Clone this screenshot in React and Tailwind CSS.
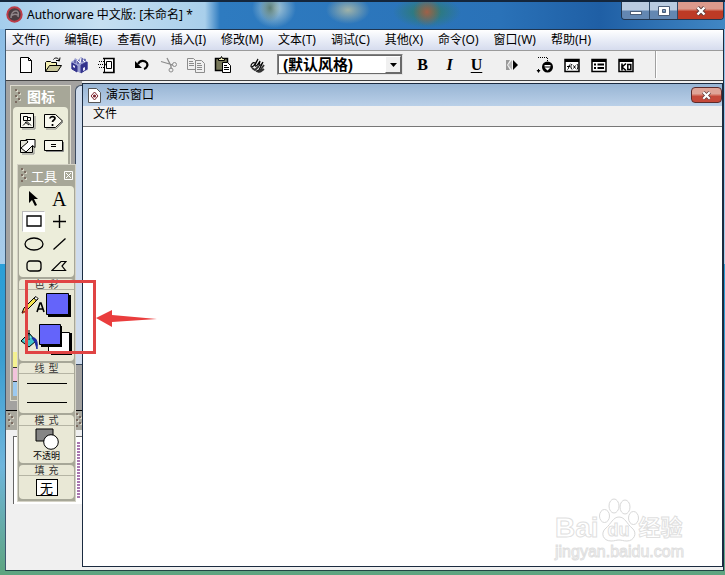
import React from 'react';

const MENUS = [
  '文件(F)', '编辑(E)', '查看(V)', '插入(I)', '修改(M)', '文本(T)',
  '调试(C)', '其他(X)', '命令(O)', '窗口(W)', '帮助(H)',
];

const Icon = ({ children, w = 18, h = 18 }) => (
  <svg width={w} height={h} viewBox={`0 0 ${w} ${h}`} fill="none" stroke="#000" aria-hidden="true">
    {children}
  </svg>
);

const NewIcon = () => (
  <Icon>
    <path d="M3.5 1.5h8l3 3v12h-11z" fill="#fff" />
    <path d="M11.5 1.5v3h3M14.5 5v12M3 16.5h12" />
  </Icon>
);

const OpenIcon = () => (
  <Icon>
    <path d="M1.5 15.5v-9l1-1h4l1 1h5v3" fill="#f5f1b4" />
    <path d="M1.5 15.5l4-6h12l-4 6z" fill="#c9c79c" />
    <path d="M9.5 3.5c1-2 4-2 5.5 0v2M12 4.5h3.5l.5-3" />
  </Icon>
);

const SaveIcon = () => (
  <Icon>
    <path d="M0 6l3-2 1-2 3 2 3-3 3 2 1-1 1 3 2 1v8l-4 1-4 2-5-3-4-1z" fill="#9ba0d2" stroke="none" />
    <path d="M1 7l5 3v6l-5-3zM7 4v4M10 9l6-3v7l-6 4zM11 2v4M14 3v2M4 4v3" fill="#33338c" stroke="#33338c" />
    <path d="M2 9l2 1v2l-2-1zM12 12l2-1v3l-2 1z" fill="#e8eaf8" stroke="none" />
    <path d="M6 4l3 3 1-5M12 4l2 2" stroke="#fff" />
  </Icon>
);

const ImportIcon = () => (
  <Icon>
    <path d="M6.5 2.5h9v14h-9z" fill="#fff" />
    <path d="M5 2.5h11v14H5" strokeWidth="1.5" />
    <path d="M8.5 5.5h5v7h-5z" />
    <path d="M1 5.5h5M0 8.5h7M1 11.5h5" strokeDasharray="1 1" />
    <path d="M6 6l2 2.5-2 2.5z" fill="#000" stroke="none" />
  </Icon>
);

const UndoIcon = () => (
  <Icon>
    <path d="M5 8c2-4 7-4 9-1 1 2 0 5-3 6" strokeWidth="2.2" />
    <path d="M2 5v7h7z" fill="#000" stroke="none" />
  </Icon>
);

const CutIcon = () => (
  <Icon>
    <g stroke="#8c8c8c">
      <path d="M1 5.5l12 3.5M7 2l4 8v3" strokeWidth="1.3" />
      <circle cx="14.5" cy="8.5" r="2" />
      <circle cx="11" cy="14" r="2" />
    </g>
  </Icon>
);

const CopyIcon = () => (
  <Icon>
    <g stroke="#8c8c8c" fill="#f0f0f0">
      <path d="M.5 2.5h6l2 2v9h-8z" />
      <path d="M8.5 4.5h6l3 3v9h-9z" />
      <path d="M2 5.5h4M2 7.5h5M2 9.5h5M10 7.5h4M10 9.5h5M10 11.5h5M10 13.5h5" />
    </g>
  </Icon>
);

const PasteIcon = () => (
  <Icon>
    <path d="M1.5 2.5h12v12h-12z" fill="#77775a" strokeWidth="1.5" />
    <path d="M4.5 4.5v-2h2l1-2 1 2h2v2z" fill="#e8e6b4" />
    <path d="M8.5 6.5h5l3 3v7h-8z" fill="#fff" />
    <path d="M10 9.5h3M10 11.5h5M10 13.5h5" />
  </Icon>
);

const FindIcon = () => (
  <Icon>
    <path d="M6 7c-2-1-4 1-4 3s2 1 4-2l3-5-3 6c0 2 2 1 3-1l2-3-1 4c1 1 3-1 4-3l-4 8-2 1" strokeWidth="1.2" />
    <path d="M3 12l3 2 4-4M7 15l3 1 5-7M11 16l4-3" strokeWidth="1.8" stroke="#333" />
  </Icon>
);

const RunIcon = () => (
  <Icon>
    <path d="M3 4h4L4 9l3 5H3z" fill="#999" stroke="none" />
    <path d="M9 4v10L5 9z" fill="#b5b5b5" stroke="none" />
    <path d="M10 4l5 5-5 5z" fill="#000" stroke="none" />
  </Icon>
);

const ControlIcon = () => (
  <Icon>
    <path d="M2 1.5h9M11.5 2v3M2.5 13v3" strokeDasharray="1 1" />
    <path d="M.5 14h4l-2 3z" fill="#000" stroke="none" />
    <circle cx="11.5" cy="11" r="5.5" fill="#000" stroke="none" />
    <path d="M8.5 9h6v1.5h-6zM8.5 11.500h6l-3 3z" fill="#fff" stroke="none" />
  </Icon>
);

const Frame = ({ children }) => (
  <Icon>
    <path d="M2 3.5h14v12H2z" fill="#fff" strokeWidth="1.5" />
    <path d="M2 4.5h14" strokeWidth="3" />
    {children}
  </Icon>
);

const FunctionIcon = () => (
  <Frame>
    <path d="M4.5 13.5c1.5 0 1-5 3-5.500M4 10.5h3M9 8c-1.500 2-1.500 3.500 0 5.500M10.500 9.500l2 3M12.500 9.500l-2 3M14 8c1.300 2 1.300 3.500 0 5.500" />
  </Frame>
);

const ListIcon = () => (
  <Frame>
    <path d="M4 8.5h2M7.5 8.5H14M4 12h2M7.5 12H14" strokeWidth="1.8" />
  </Frame>
);

const KoIcon = () => (
  <Frame>
    <path d="M5 7.5v7M9 7.5l-4 3.5 4 3.5" strokeWidth="1.6" />
    <path d="M10.8 8.5h3v5h-3z" strokeWidth="1.5" />
  </Frame>
);

const ToolButton = ({ label, children }) => (
  <button aria-label={label} className="flex h-6 w-[27px] items-center justify-center">
    {children}
  </button>
);

const Toolbar = () => (
  <div className="flex h-[30px] shrink-0 items-center border-t border-[#9b9b9b] bg-[#f0f0f0] pb-0.5 pl-1.5">
    <div className="flex">
      <ToolButton label="新建"><NewIcon /></ToolButton>
      <ToolButton label="打开"><OpenIcon /></ToolButton>
      <ToolButton label="保存"><SaveIcon /></ToolButton>
      <ToolButton label="导入"><ImportIcon /></ToolButton>
    </div>
    <div className="ml-2 flex">
      <ToolButton label="撤消"><UndoIcon /></ToolButton>
      <ToolButton label="剪切"><CutIcon /></ToolButton>
      <ToolButton label="复制"><CopyIcon /></ToolButton>
      <ToolButton label="粘贴"><PasteIcon /></ToolButton>
    </div>
    <div className="ml-2 flex">
      <ToolButton label="查找"><FindIcon /></ToolButton>
    </div>
    <div className="relative ml-1.5 h-[21px] w-[126px] border border-[#e3e3e3] border-t-[#808080] border-l-[#808080] bg-white">
      <select
        aria-label="风格"
        className="h-full w-full appearance-none border border-[#696969] bg-white pl-1 font-['Liberation_Sans','Noto_Sans_CJK_SC',sans-serif] text-[15px] leading-4 font-bold text-black"
      >
        <option>(默认风格)</option>
      </select>
      <span className="pointer-events-none absolute inset-y-px right-px flex w-4 items-center justify-center border border-white border-r-[#696969] border-b-[#696969] bg-[#f0f0f0]">
        <svg width="7" height="4" viewBox="0 0 7 4" aria-hidden="true"><path d="M0 0h7L3.5 4z" /></svg>
      </span>
    </div>
    <div className="ml-1.5 flex font-['Liberation_Serif',serif] text-[16px] leading-5 font-bold">
      <ToolButton label="粗体">B</ToolButton>
      <ToolButton label="斜体"><span className="italic">I</span></ToolButton>
      <ToolButton label="下划线"><span className="underline underline-offset-2">U</span></ToolButton>
    </div>
    <div className="ml-2 flex">
      <ToolButton label="运行"><RunIcon /></ToolButton>
    </div>
    <div className="ml-1.5 flex">
      <ToolButton label="控制面板"><ControlIcon /></ToolButton>
      <ToolButton label="函数"><FunctionIcon /></ToolButton>
      <ToolButton label="变量"><ListIcon /></ToolButton>
      <ToolButton label="知识对象"><KoIcon /></ToolButton>
    </div>
    <div className="ml-4 h-full w-0.5 border-l border-[#a0a0a0] bg-white" />
  </div>
);

const CloseGlyph = ({ size = 12 }) => (
  <svg width={size} height={size} viewBox="0 0 12 12" aria-hidden="true">
    <path d="M2.5 2.5l7 7M9.5 2.5l-7 7" stroke="#5b3a3a" strokeWidth="4" />
    <path d="M2.5 2.5l7 7M9.5 2.5l-7 7" stroke="#fff" strokeWidth="2.4" />
  </svg>
);

const TitleBar = () => (
  <header className="flex h-[29px] shrink-0 items-start border-t-2 border-[#14263c] pl-1.5">
    <div className="flex h-[25px] items-center">
      <svg width="17" height="17" viewBox="0 0 17 17" fill="none" aria-hidden="true">
        <circle cx="8.5" cy="8.5" r="7.2" fill="#4a3d42" stroke="#bd3c48" strokeWidth="2" />
        <path d="M5 12c0-4 2-7 5-7 2 0 3 2 2 6M5 10c2-2 5-2 7-1" stroke="#90868a" strokeWidth="1.5" />
      </svg>
      <h1 className="ml-1 text-[12px] leading-4">Authorware 中文版: [未命名] *</h1>
    </div>
    <div className="mr-px ml-auto flex h-[18px] overflow-hidden rounded-b border border-t-0 border-[#22364f]">
      <button aria-label="最小化" className="flex w-7 items-center justify-center border-r border-[#2f4967] bg-linear-to-b from-[#b9cbe0] from-45% to-[#6387b2] to-55% pt-1">
        <span className="h-1 w-3 border border-[#4a5d78] bg-white" />
      </button>
      <button aria-label="最大化" className="flex w-7 items-center justify-center border-r border-[#2f4967] bg-linear-to-b from-[#b9cbe0] from-45% to-[#6387b2] to-55%">
        <svg width="12" height="10" viewBox="0 0 12 10" aria-hidden="true">
          <path d="M.5.5h11v9H.5zM4.5 3.5h3v3h-3z" fill="#fff" fillRule="evenodd" stroke="#4a5d78" />
        </svg>
      </button>
      <button aria-label="关闭" className="flex w-[45px] items-center justify-center bg-linear-to-b from-[#dc9a8c] from-40% to-[#bd3a25] to-55%">
        <CloseGlyph />
      </button>
    </div>
  </header>
);

const Grip = () => (
  <svg width="6" height="15" viewBox="0 0 6 15" className="shrink-0" aria-hidden="true">
    <path d="M0 0h2v2H0zM3 3h2v2H3zM0 6h2v2H0zM3 9h2v2H3zM0 12h2v2H0z" fill="#7b6b60" />
    <path d="M2 1h1v2H1V2h1zM5 4h1v2H4V5h1zM2 7h1v2H1V8h1zM5 10h1v2H4v-1h1z" fill="#d9d6c8" />
  </svg>
);

const IconPalette = () => (
  <section className="mt-1 ml-1 flex h-[316px] w-[61px] flex-col border border-[#dedccf] bg-[#a7a798] px-0.5 pb-1">
    <div className="flex h-[21px] items-center gap-1.5 pl-0.5">
      <Grip />
      <h2 className="text-[14px] leading-5 font-bold text-white">图标</h2>
    </div>
    <div className="relative flex-1 rounded-t-sm bg-[#ecedda]">
      <div className="grid grid-cols-2 gap-y-[5px] pt-1 pl-1.5">
        <button aria-label="显示" className="flex h-5 w-6 items-center">
          <Icon>
            <path d="M3 17h13V4" stroke="#888" />
            <path d="M1.5 1.5h13v14h-13z" fill="#f8f8f0" />
            <path d="M4.5 4.5h4v4h-4zM8.5 5.5h3v3h-3zM4 13.5l4-4 4 4M6 10l4 3" />
          </Icon>
        </button>
        <button aria-label="判断" className="flex h-5 w-6 items-center">
          <Icon w={20}>
            <path d="M2 17h10l7-7" stroke="#888" />
            <path d="M.5 2.5h11l7 6.500-7 6.500H.5z" fill="#f8f8f0" />
            <path d="M6 6.500c0-2.500 5-2.500 5 0 0 1.500-2.500 1.500-2.500 3.500M8.500 12v2" strokeWidth="1.7" />
          </Icon>
        </button>
        <button aria-label="擦除" className="flex h-5 w-6 items-center">
          <Icon>
            <path d="M3 17h12V8" stroke="#888" />
            <path d="M1.5 3.5h12v12h-12z" fill="#e4e4da" />
            <path d="M2 11l7-6-2-2.5h9v8l-2.500-2L7 15z" fill="#fff" />
          </Icon>
        </button>
        <button aria-label="计算" className="flex h-5 w-6 items-center">
          <Icon w={20}>
            <path d="M2 14.5h17.5V5" stroke="#888" />
            <path d="M.5 3.5h18v10H.5z" fill="#f8f8f0" />
            <path d="M7 7.5h5M7 9.5h5" />
          </Icon>
        </button>
      </div>
      {/* colour flags at the foot of the palette */}
      <div className="absolute inset-x-0 bottom-0 flex flex-col">
        <span className="h-4 border-b border-[#333] bg-[#f5f291]" />
        <span className="h-[14px] border-b border-[#333] bg-[#f3c3dc]" />
        <span className="h-[14px] bg-[#9cc9ef]" />
      </div>
    </div>
  </section>
);

const ToolSection = ({ title, children }) => (
  <section className="rounded-sm bg-[#e9e8d6]">
    <h3 className="flex h-[11px] justify-center gap-1 border-b border-[#b5b4a4] text-[10px] leading-[10px] text-[#333]">
      {title.split(' ').map((c) => <span key={c}>{c}</span>)}
    </h3>
    {children}
  </section>
);

const DrawTool = ({ label, active, children }) => (
  <button
    aria-label={label}
    className={active
      ? 'flex h-[21px] w-[23px] items-center justify-center border border-[#bbb] border-r-white border-b-white bg-white'
      : 'flex h-[21px] w-[23px] items-center justify-center'}
  >
    {children}
  </button>
);

const ToolPalette = () => (
  <aside className="absolute top-[83px] left-[11px] flex w-[59px] flex-col border border-[#d4d2c5] bg-[#a7a798] px-px pb-0.5">
    <div className="flex h-[21px] items-center gap-1 pl-0.5">
      <Grip />
      <h2 className="text-[13px] leading-4 text-white">工具</h2>
      <button aria-label="关闭工具" className="ml-auto">
        <svg width="11" height="11" viewBox="0 0 11 11" fill="none" stroke="#fff" aria-hidden="true">
          <path d="M1.5 1.5h8v8h-8zM3 3l5 5M8 3l-5 5" />
        </svg>
      </button>
    </div>
    <div className="flex flex-col gap-0.5">
      <div className="grid h-[91px] grid-cols-2 content-between justify-items-center rounded-sm bg-[#ecedda] px-0.5 pt-0.5">
        <DrawTool label="选择">
          <Icon w={12} h={18}>
            <path d="M1 1v12l3-3 3 6 2-1-3-6h4z" fill="#000" stroke="none" />
          </Icon>
        </DrawTool>
        <DrawTool label="文本">
          <span className="font-['Liberation_Serif',serif] text-[20px] leading-5">A</span>
        </DrawTool>
        <DrawTool label="矩形" active>
          <Icon w={16} h={12}><path d="M1 1h14v10H1z" strokeWidth="1.3" /></Icon>
        </DrawTool>
        <DrawTool label="直线">
          <Icon w={13} h={13}><path d="M6.5 0v13M0 6.5h13" strokeWidth="1.4" /></Icon>
        </DrawTool>
        <DrawTool label="椭圆">
          <Icon w={20} h={14}><ellipse cx="10" cy="7" rx="9" ry="6" strokeWidth="1.3" /></Icon>
        </DrawTool>
        <DrawTool label="斜线">
          <Icon w={13} h={12}><path d="M.5 11.5l12-11" strokeWidth="1.3" /></Icon>
        </DrawTool>
        <DrawTool label="圆角矩形">
          <Icon w={16} h={12}><rect x="1" y="1" width="14" height="10" rx="3" strokeWidth="1.3" /></Icon>
        </DrawTool>
        <DrawTool label="多边形">
          <Icon w={16} h={12}><path d="M1 10.5L10 1.500h5l-4 4.500 3.500 4.500z" strokeWidth="1.2" /></Icon>
        </DrawTool>
      </div>
      <ToolSection title="色 彩">
        <div className="flex h-[71px] flex-col gap-1.5 pt-[3px]">
          <button aria-label="线条颜色" className="pl-0.5">
            <Icon w={51} h={25}>
              <path d="M1 20l2-5L14 4l3 2L5 18z" fill="#f3e24e" />
              <path d="M1 21l1.5-4 2 2z" fill="#b03a20" stroke="none" />
              <path d="M13 5l2-1.5 2 2-2 2z" fill="#fff" />
              <path d="M16 19l3-9h1l3 9M17 16h5" strokeWidth="1.6" />
              <path d="M27 2h23v22H27z" fill="#000" stroke="none" />
              <path d="M25.5.5h22v21h-22z" fill="#6464fa" />
            </Icon>
          </button>
          <button aria-label="填充颜色" className="pl-px">
            <Icon w={52} h={32}>
              <path d="M1 17l8-8 7 8-7 6z" fill="#3fc4c8" />
              <path d="M4 16l5-5 2 2-5 5z" fill="#b8f3f3" stroke="none" />
              <path d="M9 6v10" />
              <path d="M12 14c4-1 6 3 5 11l-2-7z" fill="#1b2ab0" stroke="#1b2a9a" />
              <path d="M31 9h21v22H31z" fill="#000" stroke="none" />
              <path d="M28.5 8.5h21v21h-21z" fill="#fff" />
              <path d="M21 2h21v21H21z" fill="#000" stroke="none" />
              <path d="M19.5.5h21v20h-21z" fill="#6464fa" />
            </Icon>
          </button>
        </div>
      </ToolSection>
      <ToolSection title="线 型">
        <div className="flex h-[39px] flex-col items-center gap-[18px] pt-[9px]">
          <span className="h-px w-10 bg-black" />
          <span className="h-px w-10 bg-black" />
        </div>
      </ToolSection>
      <ToolSection title="模 式">
        <button className="flex h-[37px] w-full flex-col items-center pt-0.5">
          <Icon w={24} h={22}>
            <path d="M1 1h17v12H1z" fill="#858585" />
            <circle cx="16" cy="14" r="7.3" fill="#fff" />
          </Icon>
          <span className="text-[9px] leading-[12px]">不透明</span>
        </button>
      </ToolSection>
      <ToolSection title="填 充">
        <div className="flex h-[23px] items-start justify-center pt-[3px]">
          <button className="h-[17px] w-[22px] border border-black bg-white text-[13px] leading-[14px]">无</button>
        </div>
      </ToolSection>
    </div>
  </aside>
);

const Baidu = () => (
  <div className="absolute right-[35px] bottom-1.5 w-[132px] font-['Liberation_Sans','Noto_Sans_CJK_SC',sans-serif] text-white [-webkit-text-stroke:1px_#dfdfdf]">
    <div className="flex items-end">
      <span className="text-[28px] leading-8 font-bold">Bai</span>
      <span className="relative flex h-[46px] w-10 items-end justify-center">
        <svg className="absolute inset-0" width="40" height="46" viewBox="0 0 40 46" fill="#fff" stroke="#d8d8d8" aria-hidden="true">
          <ellipse cx="15" cy="8" rx="5" ry="7" />
          <ellipse cx="26" cy="9" rx="5" ry="7" />
          <ellipse cx="5.5" cy="18" rx="5" ry="6.5" />
          <ellipse cx="34.5" cy="20" rx="5" ry="6.5" />
          <path d="M20 19c6 0 8 7 13 11 6 5 2 13-5 13-4 0-5-1-8-1s-4 1-8 1c-8 0-11-8-5-13 5-4 7-11 13-11z" />
        </svg>
        <span className="relative text-[18px] leading-7 font-bold">du</span>
      </span>
      <span className="text-[22px] leading-8 font-bold">经验</span>
    </div>
    <div className="text-[16px] leading-4">jingyan.baidu.com</div>
  </div>
);

const DemoWindow = () => (
  <main className="mt-0.5 mb-[3px] flex flex-1 flex-col border border-[#1b2b40] bg-white">
    <div className="flex h-[22px] shrink-0 items-center bg-linear-to-b from-[#98b5d4] to-[#bad0e8] pl-1">
      <svg width="15" height="17" viewBox="0 0 15 17" fill="none" aria-hidden="true">
        <path d="M1.5 1.5h8l4 4v10h-12z" fill="#fff" stroke="#555" />
        <path d="M7.5 5l3.5 4-3.5 4L4 9z" stroke="#7d2630" />
        <circle cx="7.5" cy="9" r="1.6" fill="#7d2630" />
      </svg>
      <h2 className="ml-1 text-[12px] leading-4">演示窗口</h2>
      <button
        aria-label="关闭演示窗口"
        className="ml-auto flex h-4 w-[31px] items-center justify-center rounded-sm border border-[#5c2b2b] bg-linear-to-b from-[#dfa497] from-40% to-[#c5493a] to-60%"
      >
        <CloseGlyph size={11} />
      </button>
    </div>
    <nav className="flex h-[21px] shrink-0 items-center border-b border-[#777] bg-[#f0f0f0] pb-1 pl-2.5">
      <button className="text-[12px] leading-4">文件</button>
    </nav>
    <div className="relative flex-1">
      <Baidu />
    </div>
  </main>
);

const LeftDock = () => (
  <div className="flex w-[76px] shrink-0 flex-col bg-[#f0f0f0]">
    <div className="flex h-[329px] bg-[#a3a2a0]">
      <IconPalette />
      <div className="mt-1 ml-1 h-[280px] w-[7px] rounded-tl-md border-t border-b border-l border-[#3c4b60] bg-[#cfdced]" />
    </div>
    <div className="flex h-5 items-center justify-between border-t border-black bg-[#a9a89e] pl-0.5">
      <Grip />
      <Grip />
    </div>
    <div className="mt-1.5 ml-[7px] h-[68px] border-t border-l border-[#666] bg-white py-[5px]">
      <div className="mr-0.5 ml-auto h-full w-[3px] bg-[repeating-linear-gradient(to_bottom,#a977b0_0_2px,#fff_2px_3px)]" />
    </div>
  </div>
);

// red box and arrow pointing at the colour section
const Callout = () => (
  <>
    <div className="pointer-events-none absolute top-[199px] left-[19px] h-[74px] w-[71px] border-3 border-[#e04444]" />
    <svg className="absolute top-[229px] left-[90px]" width="62" height="17" viewBox="0 0 62 17" aria-hidden="true">
      <path d="M0 8L16 0v5l45 4-45 3v5z" fill="#ea3d3d" />
    </svg>
  </>
);

export default function App() {
  return (
    <div className="flex h-screen flex-col bg-[#5faa78] font-['Noto_Sans','Noto_Sans_CJK_SC',sans-serif] text-[12px] text-black">
      <div className="bg-[radial-gradient(ellipse_10px_14px_at_270px_8px,#5d7f78,transparent),radial-gradient(ellipse_22px_20px_at_274px_8px,#b5d0d8,transparent),radial-gradient(ellipse_22px_14px_at_348px_10px,#9fb2a8,transparent),radial-gradient(ellipse_14px_14px_at_427px_12px,#a0604a,transparent),radial-gradient(ellipse_34px_16px_at_427px_12px,#2f7d5d,transparent),linear-gradient(to_right,#a4cdec,#c6dff1_100px,#a9cfeb_205px,#2e7bc0_220px,#2a72b8_500px,#1f5fa5_600px,#4187c4)]">
        <TitleBar />
      </div>
      <div className="flex flex-1 bg-[linear-gradient(to_bottom,#8bbde6,#a9cdea_43%,#2a9fd8_43%,#3a9ed0_60%,#6fb5dc_80%,#5ea47f)] pr-px pb-1 pl-[5px]">
        <div className="flex flex-1 flex-col border border-t-[#1f3550] border-r-[#1b2b40] border-b-[#224444] border-l-[#3f5870] bg-[#f0f0f0]">
          <nav className="flex h-5 shrink-0 items-center gap-[15px] bg-linear-to-b from-white via-[#e9edf7] to-[#d6dcee] pl-1.5">
            {MENUS.map((m) => (
              <button key={m} className="text-[12px] leading-4 whitespace-nowrap">{m}</button>
            ))}
          </nav>
          <Toolbar />
          <div className="relative flex flex-1 border-t border-[#444]">
            <LeftDock />
            <DemoWindow />
            <ToolPalette />
            <Callout />
          </div>
        </div>
      </div>
    </div>
  );
}
